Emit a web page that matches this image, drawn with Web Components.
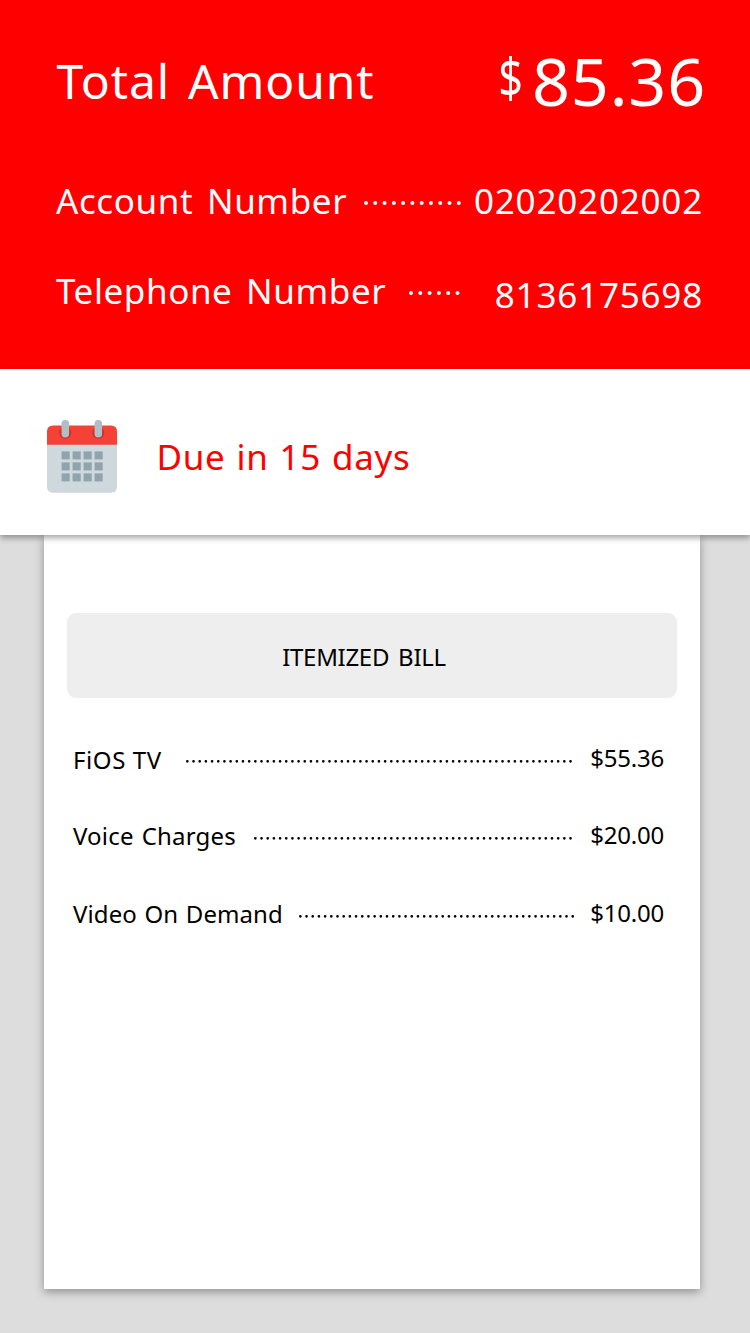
<!DOCTYPE html>
<html lang="en">
<head>
<meta charset="utf-8">
<title>Bill summary</title>
<style>
html,body{margin:0;background:#ddd}
body{font-family:"Noto Sans","Open Sans",sans-serif;width:750px;height:1333px;overflow:hidden}
</style>
</head>
<body>
<bill-page></bill-page>
<script>
const define = (name, html, setup) => customElements.define(name, class extends HTMLElement {
  connectedCallback() {
    if (this.shadowRoot) return;
    const t = document.createElement('template');
    t.innerHTML = html;
    this.attachShadow({mode: 'open'}).append(t.content.cloneNode(true));
    if (setup) setup(this, this.shadowRoot);
  }
});

// Dotted leader: count, pitch and dot diameter come from attributes.
define('dot-leader', `<style>:host{display:flex;flex:none}svg{display:block}line{stroke:currentColor;stroke-linecap:round}</style><svg><line/></svg>`, (el, root) => {
  const n = +el.getAttribute('count'), p = +el.getAttribute('pitch'), d = +el.getAttribute('dot');
  const svg = root.querySelector('svg'), line = root.querySelector('line');
  const w = (n - 1) * p + d;
  svg.setAttribute('width', w); svg.setAttribute('height', d);
  line.setAttribute('x1', d / 2); line.setAttribute('x2', w - d / 2 + .05);
  line.setAttribute('y1', d / 2); line.setAttribute('y2', d / 2);
  line.setAttribute('stroke-width', d);
  line.setAttribute('stroke-dasharray', `0 ${p}`);
});

define('bill-line', `<style>
:host{display:flex;align-items:flex-start;white-space:nowrap}
::slotted(*){flex:none}
.end{margin-left:auto;display:flex}
</style><slot name="label"></slot><slot name="dots"></slot><div class="end"><slot></slot></div>`);

define('calendar-icon', `<style>:host{display:block;width:70px;height:73px}svg{display:block}</style>
<svg width="70" height="73" viewBox="0 0 70 73">
<path d="M0 20H70V66.500Q70 72.700 63.800 72.700H6.200Q0 72.700 0 66.500Z" fill="#cfd8dc"/>
<path d="M0 24.700V11.500Q0 5.500 6.200 5.500H63.800Q70 5.500 70 11.500V24.700Z" fill="#f44336"/>
<g fill="#d02f2c"><circle cx="18.300" cy="12.800" r="6"/><circle cx="51.300" cy="12.800" r="6"/></g>
<g fill="#b0bec5"><rect x="14.500" y="0" width="7.600" height="17.500" rx="3.800"/><rect x="47.500" y="0" width="7.600" height="17.500" rx="3.800"/></g>
<g id="days" fill="#90a4ae"></g></svg>`, (el, root) => {
  let s = '';
  for (let r = 0; r < 3; r++) for (let c = 0; c < 4; c++)
    s += `<rect x="${14.6 + c * 11}" y="${31.4 + r * 11}" width="8.1" height="8"/>`;
  root.querySelector('#days').innerHTML = s;
});

define('bill-header', `<style>
:host{display:block;box-sizing:border-box;height:369px;padding:47px 47px 0 56px;background:#f00;color:#fff;font-size:35px;line-height:60px}
bill-line{height:90px}
bill-line:first-of-type{height:124px}
.total{font-size:48px;letter-spacing:.9px;word-spacing:4.500px;padding-top:4px;margin-left:.5px}
.cur{font-size:54px;margin:0 9px 0 0;transform:scaleX(.8);transform-origin:100% 0}
.sum{font-size:66.500px;letter-spacing:.8px;padding-top:3px;margin-right:-3px}
.num{letter-spacing:.8px}
.label{word-spacing:4px}
</style>
<bill-line><span slot="label" class="total">Total Amount</span><span class="cur">$</span><span class="sum">85.36</span></bill-line>
<bill-line><span slot="label" class="label" style="letter-spacing:.6px;width:290px">Account Number</span><dot-leader slot="dots" count="11" pitch="9.28" dot="4" style="margin:30.300px 0 0 18.400px"></dot-leader><span class="num">02020202002</span></bill-line>
<bill-line><span slot="label" class="label" style="letter-spacing:.58px;width:330px">Telephone Number</span><dot-leader slot="dots" count="6" pitch="9.3" dot="4" style="margin:30.300px 0 0 23.300px"></dot-leader><span class="num" style="padding-top:4px">8136175698</span></bill-line>`);

define('due-notice', `<style>
:host{display:flex;box-sizing:border-box;height:166px;padding:51px 0 0 47px;background:#fff;position:relative;z-index:1;box-shadow:0 3px 6px rgba(0,0,0,.35);color:#f00}
span{font-size:35px;line-height:60px;letter-spacing:.67px;word-spacing:1.300px;margin:7px 0 0 39.500px}
</style><calendar-icon></calendar-icon><span><slot></slot></span>`);

define('bill-card', `<style>
:host{display:block;box-sizing:border-box;width:656px;height:754px;margin-left:44px;padding:78px 23px 0;background:#fff;box-shadow:0 3px 9px rgba(0,0,0,.35);color:#000;font-size:24px;line-height:40px}
.title{box-sizing:border-box;height:85px;width:610px;margin-left:-.5px;border-radius:9px;background:#eee;padding:24px 15px 0 0;text-align:center;letter-spacing:-.3px;word-spacing:3px}
.items{padding:42px 13px 0 6px}
bill-line{height:77px}
.price{margin-top:-2px;letter-spacing:-.2px}
</style>
<div class="title">ITEMIZED BILL</div>
<div class="items">
<bill-line><span slot="label" style="letter-spacing:.6px;width:89px">FiOS TV</span><dot-leader slot="dots" count="63" pitch="6.18" dot="2.7" style="margin:20px 0 0 24.100px"></dot-leader><span class="price">$55.36</span></bill-line>
<bill-line><span slot="label" style="letter-spacing:.2px;word-spacing:1.500px;width:163px;margin-top:-1px">Voice Charges</span><dot-leader slot="dots" count="52" pitch="6.18" dot="2.7" style="margin:20px 0 0 18.100px"></dot-leader><span class="price">$20.00</span></bill-line>
<bill-line><span slot="label" style="letter-spacing:.1px;word-spacing:1.200px;width:210px">Video On Demand</span><dot-leader slot="dots" count="45" pitch="6.19" dot="2.7" style="margin:21px 0 0 16.200px"></dot-leader><span class="price" style="margin-top:-1px">$10.00</span></bill-line>
</div>`);

define('bill-page', `<style>:host{display:block;height:1333px;background:#ddd}</style>
<bill-header></bill-header><due-notice>Due in 15 days</due-notice><bill-card></bill-card>`);
</script>
</body>
</html>
